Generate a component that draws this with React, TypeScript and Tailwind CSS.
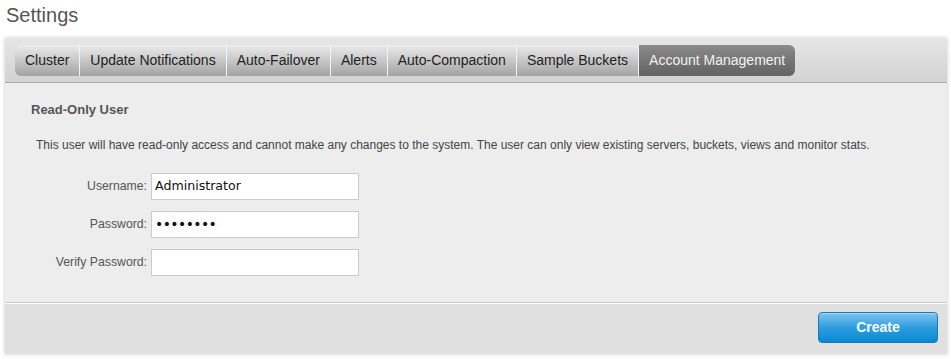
import React from "react";

const tabs = [
  "Cluster",
  "Update Notifications",
  "Auto-Failover",
  "Alerts",
  "Auto-Compaction",
  "Sample Buckets",
  "Account Management",
];

export default function App() {
  return (
    <div className="w-[951px] h-[359px] bg-white font-['Liberation_Sans',Arial,sans-serif] overflow-hidden">
      <div className="pl-[6px] pt-[3px] h-[38px] text-[20px] leading-[24px] text-[#555]">Settings</div>
      <div className="ml-[5px] w-[942px] shadow-[0_0_4px_rgba(0,0,0,0.22)]">
        <div className="h-[45px] bg-gradient-to-b from-[#e6e6e6] to-[#d2d2d2] border-b border-[#a9abad] pl-[10px] pt-[7px]">
          <div className="flex h-[31px]">
            {tabs.map((t, i) => {
              const active = i === tabs.length - 1;
              return (
                <div
                  key={t}
                  className={
                    "h-[31px] px-[10px] flex items-center text-[14px] " +
                    (active
                      ? "bg-gradient-to-b from-[#8a8a8a] to-[#626262] text-[#f2f2f2] rounded-tr-[6px] rounded-br-[6px] border-l border-[#f4f4f4]"
                      : "bg-gradient-to-b from-[#ececec] to-[#a3a3a3] text-[#222] border-l border-[#f4f4f4] " +
                        (i === 0 ? "rounded-tl-[6px] rounded-bl-[6px] border-l-0" : ""))
                  }
                >
                  {t}
                </div>
              );
            })}
          </div>
        </div>
        <div className="bg-[#ededed] h-[220px] border-b border-[#c9cbca] pl-[26px]">
          <div className="pt-[19px] text-[13px] font-bold text-[#555] leading-[16px]">Read-Only User</div>
          <div className="pt-[19px] pl-[5px] text-[12px] text-[#444] leading-[16px]">
            This user will have read-only access and cannot make any changes to the system. The user can only view existing servers, buckets, views and monitor stats.
          </div>
          <div className="pt-[20px] flex flex-col gap-[11px]">
            {[
              ["Username:", "Administrator", false],
              ["Password:", "••••••••", true],
              ["Verify Password:", "", false],
            ].map(([l, v, pw]) => (
              <div key={l as string} className="flex items-center">
                <div className="w-[120px] text-right text-[12.25px] text-[#555] pr-[4px]">{l}</div>
                <div className="w-[208px] h-[27px] bg-white border border-[#c8cccf] flex items-center pl-[3px] font-['DejaVu_Sans',sans-serif] text-[#111]">
                  {pw ? (
                    <span className="text-[14px] tracking-[-0.6px]">{v}</span>
                  ) : (
                    <span className="text-[12.6px]">{v}</span>
                  )}
                </div>
              </div>
            ))}
          </div>
        </div>
        <div className="border-t border-white bg-[#dfe0df] h-[51px] flex items-start justify-end pr-[9px] pt-[8px]">
          <button className="w-[120px] h-[31px] rounded-[4px] border border-[#1a78b6] bg-gradient-to-b from-[#7cc3ef] via-[#2a9ee0] to-[#0489d3] text-white font-bold text-[14px] shadow-[inset_0_1px_0_rgba(255,255,255,0.4)]">
            Create
          </button>
        </div>
      </div>
    </div>
  );
}
